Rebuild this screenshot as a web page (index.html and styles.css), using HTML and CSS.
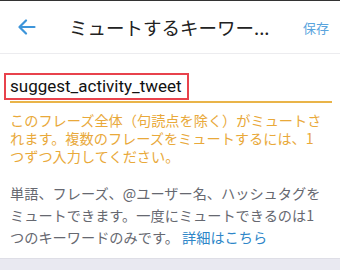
FILE: index.html
```html
<!DOCTYPE html>
<html lang="ja">
<head>
<meta charset="utf-8">
<link rel="stylesheet" href="styles.css">
</head>
<body>
<div class="screen">
  <header class="bar">
    <svg class="back" width="18" height="16" viewBox="0 0 18 16" fill="none" stroke="#3d95da" stroke-width="2.2" stroke-linecap="round" stroke-linejoin="round"><path d="M16.5 8H2M8 1.5L1.5 8L8 14.5"/></svg>
    <div class="title">ミュートするキーワー...</div>
    <div class="save">保存</div>
  </header>
  <main class="content">
    <div class="field">
      <span class="value">suggest_activity_tweet</span>
    </div>
    <p class="warn">このフレーズ全体（句読点を除く）がミュートされます。複数のフレーズをミュートするには、1つずつ入力してください。</p>
    <p class="help">単語、フレーズ、@ユーザー名、ハッシュタグをミュートできます。一度にミュートできるのは1つのキーワードのみです。 <span class="link">詳細はこちら</span></p>
  </main>
  <footer class="foot"></footer>
</div>
</body>
</html>
```
FILE: styles.css
```css
html, body { margin: 0; padding: 0; }
body {
  width: 340px;
  height: 270px;
  overflow: hidden;
  background: #fff;
  font-family: "Noto Sans CJK JP", "Noto Sans", sans-serif;
}
.screen {
  display: flex;
  flex-direction: column;
  height: 270px;
  border-top: 1px solid #333;
  box-sizing: border-box;
}
.bar {
  display: flex;
  align-items: center;
  height: 53px;
  border-bottom: 1px solid #ececef;
  box-sizing: border-box;
  padding-left: 18px;
}
.back { flex: none; }
.title {
  margin-left: 33px;
  font-size: 18.5px;
  color: #222;
  flex: 1;
  white-space: nowrap;
}
.save {
  font-size: 13px;
  color: #5aa4dd;
  margin-right: 11px;
}
.content {
  flex: 1;
  padding: 19px 8px 0 10px;
}
.field {
  border-bottom: 2px solid #e9b449;
  padding-bottom: 2px;
}
.value {
  display: inline-block;
  font-family: Roboto, "Liberation Sans", sans-serif;
  font-size: 17px;
  color: #111;
  line-height: 23px;
  outline: 2px solid #e8424c;
  outline-offset: -1px;
  padding: 1px 6px 1px 5px;
  margin-left: -5px;
}
.warn {
  margin: 8px 6px 0 0;
  font-size: 14.2px;
  line-height: 18px;
  color: #e9a93a;
}
.help {
  margin: 17px 6px 0 0;
  font-size: 14.2px;
  line-height: 22px;
  color: #666870;
}
.link { color: #2e86c8; }
.foot {
  height: 11px;
  background: #e9e9f1;
  border-top: 1px solid #dedee6;
}
```
